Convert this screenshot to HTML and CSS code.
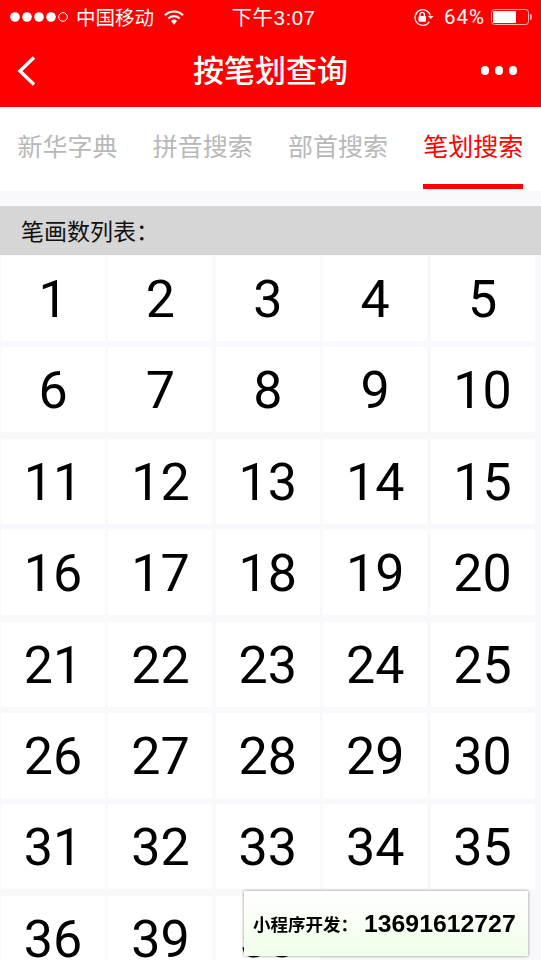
FILE: index.html
```html
<!DOCTYPE html>
<html lang="en">
<head>
    <meta charset="UTF-8">
    <meta name="viewport" content="width=device-width, initial-scale=1.0">
    <title>按笔划查询</title>
    <link rel="stylesheet" href="styles.css">
</head>
<body>
    <div class="header">
        <div class="status-bar">
            <div class="status-left">
                <svg class="signal" width="66" height="14" viewBox="0 0 66 14">
                    <circle cx="5" cy="7" r="4.800" fill="#fff"/>
                    <circle cx="17" cy="7" r="4.800" fill="#fff"/>
                    <circle cx="29" cy="7" r="4.800" fill="#fff"/>
                    <circle cx="41" cy="7" r="4.800" fill="#fff"/>
                    <circle cx="53" cy="7" r="4.300" fill="none" stroke="#fff" stroke-width="1"/>
                </svg>
                <span>中国移动</span>
                <svg class="wifi" width="20" height="15" viewBox="0 0 20 15">
                    <path d="M1 5.200a12.800 12.800 0 0 1 18 0" fill="none" stroke="#fff" stroke-width="2.200"/>
                    <path d="M4.300 8.500a8 8 0 0 1 11.400 0" fill="none" stroke="#fff" stroke-width="2.200"/>
                    <path d="M7 11a4.300 4.300 0 0 1 6 0l-3 3.800z" fill="#fff"/>
                </svg>
            </div>
            <div class="status-time">下午3:07</div>
            <div class="status-right">
                <svg class="rotation" width="20" height="17" viewBox="0 0 20 17">
                    <path d="M15.300 12.800A7.800 7.800 0 1 1 16.300 6.500" fill="none" stroke="#fff" stroke-width="1.200"/>
                    <path d="M14 7h5.500l-2.700 3z" fill="#fff"/>
                    <rect x="4.500" y="7" width="7.500" height="5.800" rx="1" fill="#fff"/>
                    <path d="M6 7V5.500a2.200 2.200 0 0 1 4.400 0V7" fill="none" stroke="#fff" stroke-width="1.300"/>
                </svg>
                <span>64%</span>
                <svg class="battery" width="41" height="16" viewBox="0 0 41 16">
                    <rect x="0.500" y="0.500" width="37" height="15" rx="3" fill="none" stroke="#ffb3b3"/>
                    <rect x="2" y="2" width="23" height="12" rx="1" fill="#fff"/>
                    <path d="M39 5c1.400 0 2 1 2 3s-.6 3-2 3z" fill="#ffb3b3"/>
                </svg>
            </div>
        </div>
        <div class="nav-bar">
            <svg class="back" width="20" height="32" viewBox="0 0 20 32">
                <path d="M17 2.500L3 16l14 13.500" fill="none" stroke="#fff" stroke-width="3.400"/>
            </svg>
            <h1>按笔划查询</h1>
            <div class="more"><i></i><i></i><i></i></div>
        </div>
    </div>

    <div class="tabs">
        <div class="tab"><span>新华字典</span></div>
        <div class="tab"><span>拼音搜索</span></div>
        <div class="tab"><span>部首搜索</span></div>
        <div class="tab active"><span>笔划搜索</span></div>
    </div>

    <div class="list-title">笔画数列表：</div>

    <div class="stroke-grid">
        <div class="cell">1</div><div class="cell">2</div><div class="cell">3</div><div class="cell">4</div><div class="cell">5</div>
        <div class="cell">6</div><div class="cell">7</div><div class="cell">8</div><div class="cell">9</div><div class="cell">10</div>
        <div class="cell">11</div><div class="cell">12</div><div class="cell">13</div><div class="cell">14</div><div class="cell">15</div>
        <div class="cell">16</div><div class="cell">17</div><div class="cell">18</div><div class="cell">19</div><div class="cell">20</div>
        <div class="cell">21</div><div class="cell">22</div><div class="cell">23</div><div class="cell">24</div><div class="cell">25</div>
        <div class="cell">26</div><div class="cell">27</div><div class="cell">28</div><div class="cell">29</div><div class="cell">30</div>
        <div class="cell">31</div><div class="cell">32</div><div class="cell">33</div><div class="cell">34</div><div class="cell">35</div>
        <div class="cell">36</div><div class="cell">39</div><div class="cell">53</div>
    </div>

    <div class="contact"><span class="contact-label">小程序开发：</span><span class="contact-phone">13691612727</span></div>
</body>
</html>
```

FILE: styles.css
```css
html, body {
    height: 960px;
    overflow: hidden;
}
body {
    margin: 0;
    background: #F9F8FD;
    font-family: "Noto Sans CJK SC", sans-serif;
    color: #000000;
}
.header {
    background: #FF0000;
    color: #FFFFFF;
    height: 107px;
}
.status-bar {
    height: 34px;
    display: grid;
    grid-template-columns: 1fr auto 1fr;
    align-items: center;
    font-size: 19.500px;
}
.status-left {
    display: flex;
    align-items: center;
    padding-left: 10px;
}
.status-left span {
    margin-bottom: 2px;
}
.wifi {
    margin-left: 10px;
}
.status-time {
    padding: 0 0 2px 6px;
    font-family: "Liberation Sans", "Noto Sans CJK SC", sans-serif;
    font-size: 20.500px;
    letter-spacing: 0.500px;
}
.status-right {
    display: flex;
    align-items: center;
    justify-content: flex-end;
    padding-right: 9px;
}
.status-right span {
    margin: 0 6px 0 10px;
    font-family: "Roboto", sans-serif;
    font-size: 20.500px;
    letter-spacing: 1px;
}
.nav-bar {
    height: 73px;
    display: grid;
    grid-template-columns: 1fr auto 1fr;
    align-items: center;
    padding: 0 24px;
}
.back {
    margin-left: -7px;
}
.nav-bar h1 {
    margin: 0;
    padding-bottom: 4px;
    font-size: 31px;
    font-weight: 500;
}
.more {
    display: flex;
    justify-content: flex-end;
    gap: 5.500px;
}
.more i {
    width: 8.500px;
    height: 8.500px;
    border-radius: 50%;
    background: #FFFFFF;
}
.tabs {
    display: flex;
    height: 84px;
    background: #FFFFFF;
    font-size: 25px;
    color: #B8B8B8;
}
.tab {
    flex: 1;
    display: flex;
    justify-content: center;
}
.tab span {
    height: 77px;
    line-height: 76px;
}
.tab.active {
    color: #FF0000;
}
.tab.active span {
    border-bottom: 5px solid #FF0000;
}
.list-title {
    margin-top: 15px;
    height: 49px;
    line-height: 48px;
    padding-left: 21px;
    background: #D6D6D6;
    font-size: 23px;
    color: #111111;
}
.stroke-grid {
    display: grid;
    grid-template-columns: repeat(5, 104px);
    grid-auto-rows: 85px;
    column-gap: 3.400px;
    row-gap: 6.400px;
    padding: 1px 0 0 1px;
}
.cell {
    padding-top: 2px;
    box-sizing: border-box;
    background: #FFFFFF;
    display: flex;
    align-items: center;
    justify-content: center;
    font-family: "Roboto", sans-serif;
    font-size: 52px;
}
.contact {
    position: fixed;
    left: 244px;
    top: 891px;
    width: 275px;
    height: 65px;
    padding-left: 9px;
    display: flex;
    align-items: center;
    background: linear-gradient(#FFFFFF, #F0FFE9);
    box-shadow: 0 0 3px rgba(0, 0, 0, 0.450);
    font-weight: bold;
}
.contact-label {
    width: 111px;
    font-size: 17.500px;
}
.contact-phone {
    font-family: "Liberation Sans", sans-serif;
    font-size: 24.800px;
}
```
